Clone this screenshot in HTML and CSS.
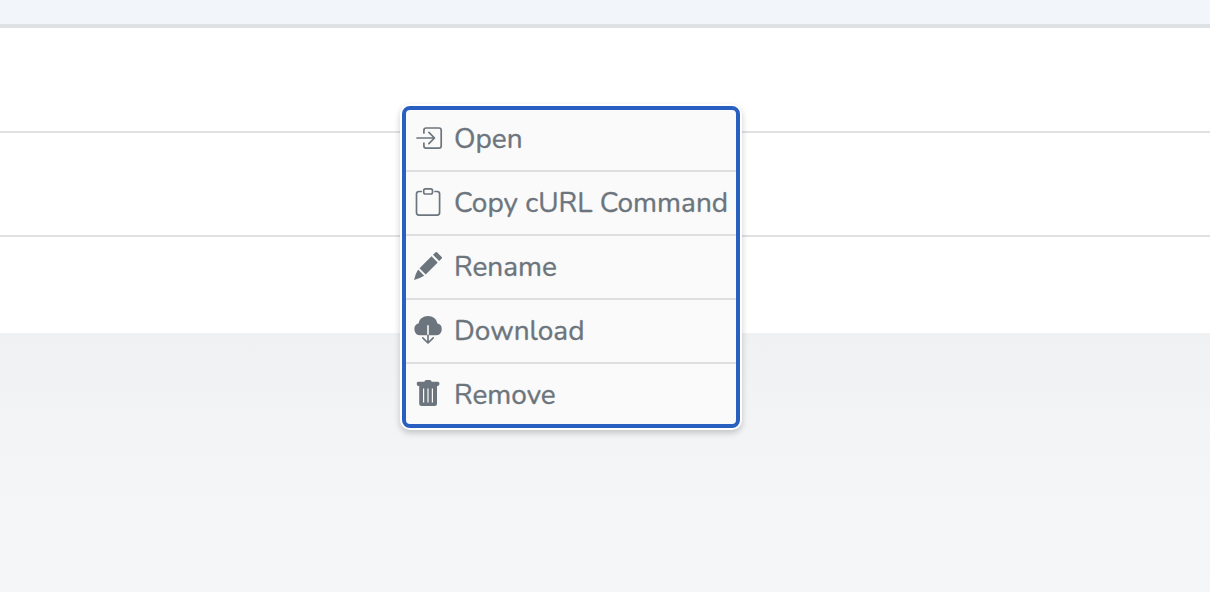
FILE: index.html
```
<!DOCTYPE html>
<html lang="en">
<head>
<meta charset="utf-8">
<title>File menu</title>
<link rel="stylesheet" href="styles.css">
</head>
<body>
<div class="table">
  <div class="table-head"></div>
  <div class="table-row"></div>
  <div class="table-row"></div>
  <div class="table-row table-row-last"></div>
</div>
<ul class="menu">
  <li class="item">
    <svg class="icon line" viewBox="0 0 28 28"><path d="M9.900 9V6.200Q9.900 4 12.100 4H25Q27.200 4 27.200 6.200V22Q27.200 24.200 25 24.200H12.100Q9.900 24.200 9.900 22V19.200M3 14H20.300M14.900 8.400L20.500 14L14.900 19.600"/></svg>
    <span class="label">Open</span>
  </li>
  <li class="item">
    <svg class="icon line" viewBox="0 0 28 28"><path d="M7.200 3.500H5Q2.500 3.500 2.500 6V24.600Q2.500 27.100 5 27.100H23.100Q25.600 27.100 25.600 24.600V6Q25.600 3.500 23.100 3.500H21"/><rect x="9.700" y=".8" width="8.800" height="5.200" rx="1.700"/></svg>
    <span class="label">Copy cURL Command</span>
  </li>
  <li class="item">
    <svg class="icon" viewBox="0 0 28 28"><path d="M21.6.3Q22.3-.3 23 .3L27.700 5Q28.400 5.700 27.700 6.400L25.200 8.900L19 2.800ZM17.500 4.300L23.700 10.500L11.700 22.400L5.500 16.200ZM4.100 17.600L10.200 23.800Q5.500 26.700 0 28Q1.200 22.300 4.100 17.600Z"/></svg>
    <span class="label">Rename</span>
  </li>
  <li class="item">
    <svg class="icon" viewBox="0 0 28 28"><path d="M6.3 19.3A6.2 6.2 0 0 1 4.7 7.2C5.3 3 9.2 0 14 0S22.700 3 23.200 7.300A6.100 6.100 0 0 1 21.800 19.300H14.800V9.200H13.200V19.300Z"/><path class="stroke" d="M14 19.300V26.700M8.800 21.900L14 27L19.200 21.900"/></svg>
    <span class="label">Download</span>
  </li>
  <li class="item">
    <svg class="icon" viewBox="0 0 28 28"><path fill-rule="evenodd" d="M4.300 1.700H10.300Q10.700 0 12.200 0H15.800Q17.300 0 17.700 1.700H23.700Q25.500 1.700 25.500 3.700T23.700 5.900H23V23.500Q23 26 20.500 26H7.700Q5.200 26 5.200 23.500V5.900H4.300Q2.700 5.900 2.700 3.700T4.300 1.700ZM9 8.500V22.500H10.200V8.500ZM13.400 8.500V22.500H14.600V8.500ZM17.800 8.500V22.500H19V8.500Z"/></svg>
    <span class="label">Remove</span>
  </li>
</ul>
</body>
</html>
```
FILE: styles.css
```
* { box-sizing: border-box; }
body {
  margin: 0;
  height: 592px;
  overflow: hidden;
  background: linear-gradient(#eff1f2 333px, #f1f3f5 400px, #f3f5f7 470px, #f4f6f8 592px);
  font-family: Nunito, Lato, sans-serif;
}
.table { background: #fff; }
.table-head { height: 28px; background: #f2f6fa; border-bottom: 4px solid #dee2e4; }
.table-row { height: 105px; border-bottom: 2px solid #dfe1e2; }
.table-row + .table-row { height: 104px; }
.table-row.table-row-last { height: 96px; border-bottom: 0; }
.menu {
  position: absolute;
  left: 402px;
  top: 106px;
  width: 338px;
  height: 322px;
  margin: 0;
  padding: 0;
  list-style: none;
  background: #fafafa;
  border: 4px solid #285fc1;
  border-radius: 8px;
  box-shadow: 0 0 0 2px #fff, 0 3px 6px 2px rgba(0, 0, 0, .2);
}
.item {
  display: flex;
  height: 64px;
  padding: 16px 0 0 8px;
  gap: 12px;
  border-bottom: 2px solid #dedfe0;
  color: #6c757d;
}
.item:first-child { height: 62px; padding-top: 14px; }
.item:last-child { height: 60px; border-bottom: 0; }
.icon { width: 28px; height: 28px; flex: none; overflow: visible; fill: currentColor; }
.line, .stroke { fill: none; stroke: currentColor; stroke-width: 1.700; stroke-linecap: round; stroke-linejoin: round; }
.label {
  padding-top: 1px;
  font-size: 28px;
  line-height: 28px;
  white-space: nowrap;
  -webkit-text-stroke: .35px currentColor;
}
```
